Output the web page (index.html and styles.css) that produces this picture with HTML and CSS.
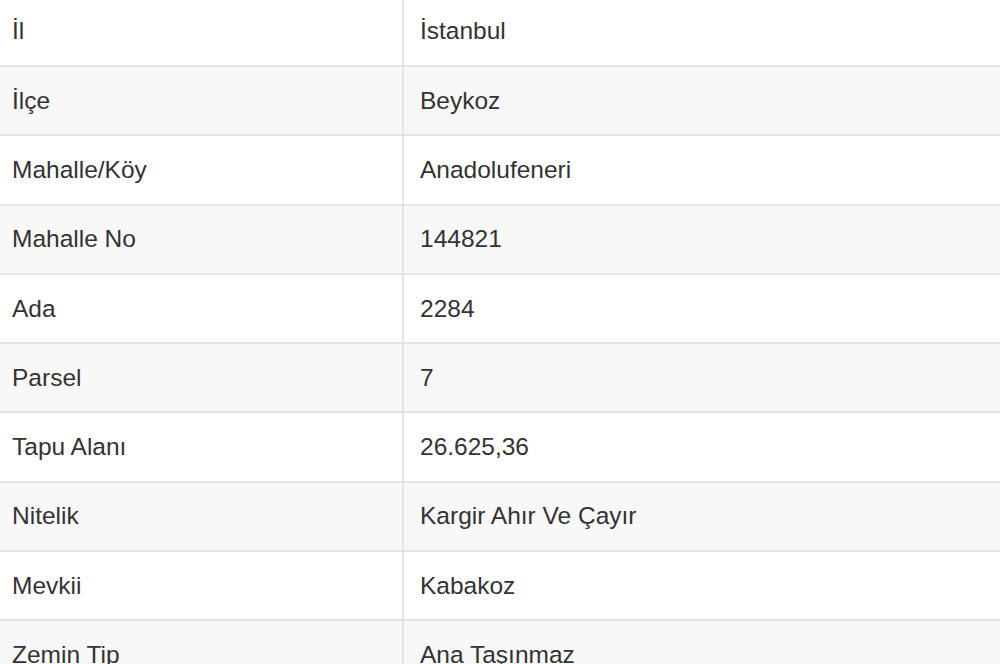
FILE: index.html
```html
<!DOCTYPE html>
<html lang="tr">
<head>
<meta charset="utf-8">
<title>Parsel Bilgileri</title>
<link rel="stylesheet" href="styles.css">
</head>
<body>
<table class="info">
  <tbody>
    <tr><td class="key">İl</td><td class="val">İstanbul</td></tr>
    <tr><td class="key">İlçe</td><td class="val">Beykoz</td></tr>
    <tr><td class="key">Mahalle/Köy</td><td class="val">Anadolufeneri</td></tr>
    <tr><td class="key">Mahalle No</td><td class="val">144821</td></tr>
    <tr><td class="key">Ada</td><td class="val">2284</td></tr>
    <tr><td class="key">Parsel</td><td class="val">7</td></tr>
    <tr><td class="key">Tapu Alanı</td><td class="val">26.625,36</td></tr>
    <tr><td class="key">Nitelik</td><td class="val">Kargir Ahır Ve Çayır</td></tr>
    <tr><td class="key">Mevkii</td><td class="val">Kabakoz</td></tr>
    <tr><td class="key">Zemin Tip</td><td class="val">Ana Taşınmaz</td></tr>
  </tbody>
</table>
</body>
</html>
```

FILE: styles.css
```css
html, body {
  margin: 0;
  padding: 0;
  background: #ffffff;
  overflow: hidden;
}
body {
  font-family: "Liberation Sans", Arial, sans-serif;
  font-size: 24.5px;
  color: #333333;
}
.info {
  border-collapse: collapse;
  table-layout: fixed;
  width: 1020px;
  margin-top: -4.3px;
}
.info td {
  height: 67.3px;
  padding: 0;
  border-top: 2px solid #e4e4e4;
  vertical-align: middle;
  box-sizing: content-box;
  line-height: 28px;
  white-space: nowrap;
}
.info tr:nth-child(even) td {
  background: #f8f8f8;
}
.info .key {
  width: 390px;
  padding-left: 12px;
  border-right: 2px solid #e4e4e4;
}
.info .val {
  padding-left: 16px;
}
```
